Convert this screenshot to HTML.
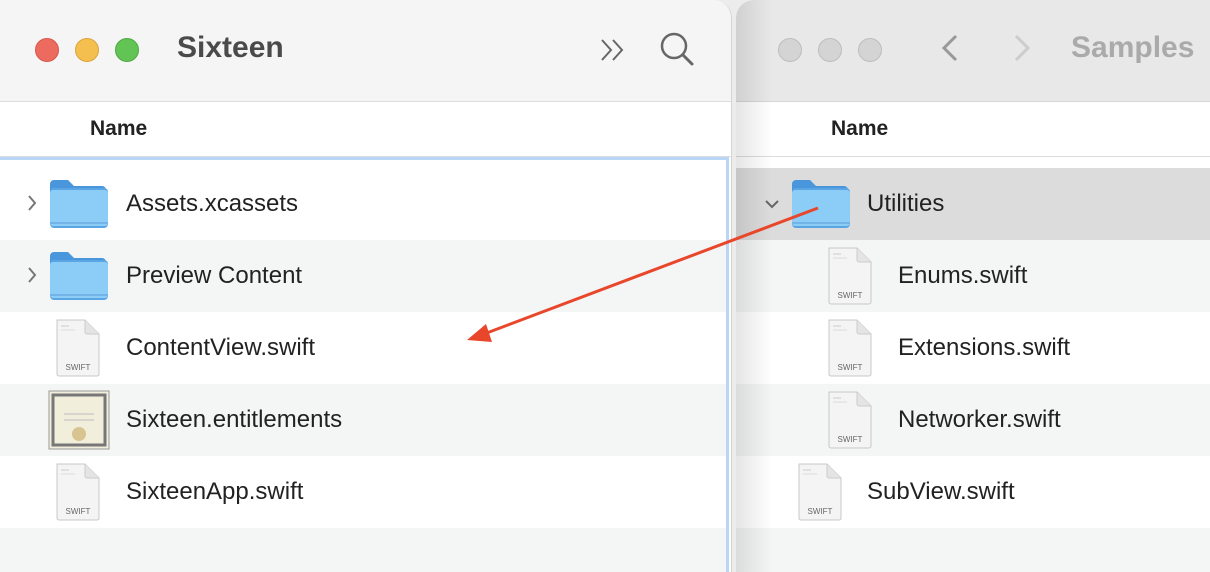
<!DOCTYPE html>
<html><head><style>
*{margin:0;padding:0;box-sizing:border-box}
body{width:1210px;height:572px;overflow:hidden;background:#ececec;font-family:"Liberation Sans",sans-serif;position:relative}
.win{position:absolute;top:0;height:572px;overflow:hidden}
.row{position:absolute;left:0;right:0;height:72px}
.g{background:#f4f5f5}.w{background:#fff}
.t{position:absolute;font-size:24px;color:#222;top:22px}
.dot{position:absolute;width:24px;height:24px;border-radius:50%;top:38px}
.fold{position:absolute;width:60px;height:52px}
.file{position:absolute;width:46px;height:60px}
</style></head><body>
<svg width="0" height="0" style="position:absolute">
<defs>
<symbol id="folder" viewBox="0 0 60 52"><path d="M2 6 a4 4 0 0 1 4-4 h14 l6 6 h28 a4 4 0 0 1 4 4 v4 H2z" fill="#4a96dc"/><rect x="2" y="10" width="58" height="40" rx="4" fill="#5aa6e4"/><rect x="2" y="12" width="58" height="36" rx="3" fill="#8ccdf7"/><rect x="2" y="44" width="58" height="2" fill="#72b4e8"/></symbol>
<symbol id="file" viewBox="0 0 46 60"><path d="M2 2 h28 l14 14 v40 a2 2 0 0 1-2 2 h-38 a2 2 0 0 1-2-2z" fill="#f4f4f4" stroke="#c8c8c8"/><path d="M30 2 v12 a2 2 0 0 0 2 2 h12" fill="#e4e4e4" stroke="#ccc"/><line x1="6" y1="8" x2="14" y2="8" stroke="#ccc"/><line x1="6" y1="12" x2="20" y2="12" stroke="#ddd"/><text x="23" y="52" font-size="8" text-anchor="middle" fill="#666" font-family="Liberation Sans">SWIFT</text></symbol>
</defs></svg>

<!-- left window -->
<div class="win" style="left:0;width:732px;background:#fff;border-top-right-radius:18px;border-right:1px solid #d4d4d4">
<div style="position:absolute;top:0;left:0;right:0;height:102px;background:#f5f5f5;border-bottom:1px solid #dcdcdc"></div>
<div class="dot" style="left:35px;background:#ed6a5e;border:1px solid #d5574b"></div>
<div class="dot" style="left:75px;background:#f5bf4f;border:1px solid #d9a43c"></div>
<div class="dot" style="left:115px;background:#61c454;border:1px solid #4ea842"></div>
<div style="position:absolute;left:177px;top:31px;font-size:30px;font-weight:bold;color:#4a4a4a">Sixteen</div>
<svg style="position:absolute;left:600px;top:38px" width="28" height="24"><path d="M2 2 L11 12 L2 22 M13 2 L22 12 L13 22" fill="none" stroke="#666" stroke-width="2"/></svg>
<svg style="position:absolute;left:658px;top:30px" width="38" height="38"><circle cx="16" cy="16" r="12" fill="none" stroke="#666" stroke-width="2.5"/><line x1="25" y1="25" x2="34" y2="34" stroke="#666" stroke-width="3" stroke-linecap="round"/></svg>
<div style="position:absolute;left:90px;top:117px;font-size:21px;font-weight:bold;color:#222">Name</div>
<div style="position:absolute;top:156px;left:0;right:0;height:1px;background:#dcdcdc"></div>
<div style="position:absolute;top:157px;left:0;right:2px;height:415px;border-top:3px solid #b9d6f7;border-right:3px solid #b9d6f7"></div>
<div class="row w" style="top:168px;right:5px"></div>
<div class="row g" style="top:240px;right:5px"></div>
<div class="row w" style="top:312px;right:5px"></div>
<div class="row g" style="top:384px;right:5px"></div>
<div class="row w" style="top:456px;right:5px"></div>
<div class="row g" style="top:528px;height:44px;right:5px"></div>
<svg style="position:absolute;left:26px;top:194px" width="12" height="18"><path d="M3 2 L9 9 L3 16" fill="none" stroke="#777" stroke-width="2"/></svg>
<svg style="position:absolute;left:26px;top:266px" width="12" height="18"><path d="M3 2 L9 9 L3 16" fill="none" stroke="#777" stroke-width="2"/></svg>
<svg class="fold" style="left:48px;top:178px"><use href="#folder"/></svg>
<svg class="fold" style="left:48px;top:250px"><use href="#folder"/></svg>
<svg class="file" style="left:55px;top:318px"><use href="#file"/></svg>
<svg style="position:absolute;left:48px;top:390px" width="62" height="60"><rect x="1" y="1" width="60" height="58" fill="#f2eedc" stroke="#999"/><rect x="5" y="5" width="52" height="50" fill="none" stroke="#777" stroke-width="3"/><line x1="16" y1="24" x2="46" y2="24" stroke="#bbb"/><line x1="16" y1="30" x2="46" y2="30" stroke="#bbb"/><circle cx="31" cy="44" r="7" fill="#d8c491"/></svg>
<svg class="file" style="left:55px;top:462px"><use href="#file"/></svg>
<div class="t" style="left:126px;top:190px">Assets.xcassets</div>
<div class="t" style="left:126px;top:262px">Preview Content</div>
<div class="t" style="left:126px;top:334px">ContentView.swift</div>
<div class="t" style="left:126px;top:406px">Sixteen.entitlements</div>
<div class="t" style="left:126px;top:478px">SixteenApp.swift</div>
</div>

<!-- right window -->
<div class="win" style="left:736px;width:474px;background:#fff;border-top-left-radius:18px">
<div style="position:absolute;top:0;left:0;right:0;height:102px;background:#e8e8e9;border-bottom:1px solid #d6d6d6"></div>
<div class="dot" style="left:42px;background:#d4d4d4;border:1px solid #bdbdbd"></div>
<div class="dot" style="left:82px;background:#d4d4d4;border:1px solid #bdbdbd"></div>
<div class="dot" style="left:122px;background:#d4d4d4;border:1px solid #bdbdbd"></div>
<svg style="position:absolute;left:200px;top:32px" width="100" height="32"><path d="M20 4 L8 16 L20 28" fill="none" stroke="#999" stroke-width="3"/><path d="M80 4 L92 16 L80 28" fill="none" stroke="#ccc" stroke-width="3"/></svg>
<div style="position:absolute;left:335px;top:31px;font-size:30px;font-weight:bold;color:#aaa">Samples</div>
<div style="position:absolute;left:95px;top:117px;font-size:21px;font-weight:bold;color:#222">Name</div>
<div style="position:absolute;top:156px;left:0;right:0;height:1px;background:#dcdcdc"></div>
<div class="row" style="top:168px;background:#dcdcdc"></div>
<div class="row g" style="top:240px"></div>
<div class="row w" style="top:312px"></div>
<div class="row g" style="top:384px"></div>
<div class="row w" style="top:456px"></div>
<div class="row g" style="top:528px;height:44px"></div>
<div style="position:absolute;left:0;top:0;width:36px;height:572px;background:linear-gradient(to right,rgba(0,0,0,0.1),rgba(0,0,0,0))"></div>
<svg style="position:absolute;left:28px;top:198px" width="16" height="12"><path d="M2 3 L8 9 L14 3" fill="none" stroke="#666" stroke-width="2"/></svg>
<svg class="fold" style="left:54px;top:178px"><use href="#folder"/></svg>
<svg class="file" style="left:91px;top:246px"><use href="#file"/></svg>
<svg class="file" style="left:91px;top:318px"><use href="#file"/></svg>
<svg class="file" style="left:91px;top:390px"><use href="#file"/></svg>
<svg class="file" style="left:61px;top:462px"><use href="#file"/></svg>
<div class="t" style="left:131px;top:190px">Utilities</div>
<div class="t" style="left:162px;top:262px">Enums.swift</div>
<div class="t" style="left:162px;top:334px">Extensions.swift</div>
<div class="t" style="left:162px;top:406px">Networker.swift</div>
<div class="t" style="left:131px;top:478px">SubView.swift</div>
</div>

<svg style="position:absolute;left:0;top:0" width="1210" height="572"><line x1="818" y1="208" x2="484" y2="334" stroke="#e8472c" stroke-width="3"/><path d="M467 340 L486 324 L492 342z" fill="#e8472c"/></svg>
</body></html>
